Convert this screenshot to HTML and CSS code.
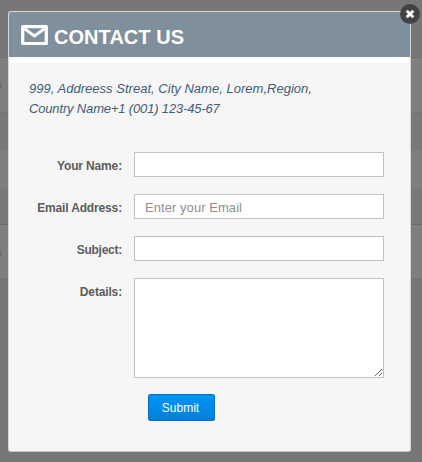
FILE: index.html
```html
<!DOCTYPE html>
<html lang="en">
<head>
<meta charset="utf-8">
<title>Contact Us</title>
<link rel="stylesheet" href="styles.css">
</head>
<body>
<div class="edge edge-top">s</div>
<div class="edge edge-bottom">s</div>
<main class="modal">
  <header class="modal-header">
    <svg class="mail" width="27" height="20" viewBox="0 0 27 20"><rect x="1.7" y="1.7" width="23.6" height="16.8" fill="none" stroke="#fff" stroke-width="3.2" stroke-linejoin="round"/><path d="M3 3.4 13.5 11 24 3.4" fill="none" stroke="#fff" stroke-width="3"/></svg>
    <h1>CONTACT US</h1>
  </header>
  <div class="modal-body">
    <p class="address"><span class="line-one">999, Addreess Streat, City Name, Lorem,Region,</span><br><span class="line-two">Country Name+1 (001) 123-45-67</span></p>
    <form>
      <label class="label-name" for="name">Your Name:</label><input id="name" type="text">
      <label class="label-email" for="email">Email Address:</label><input id="email" type="text" placeholder="Enter your Email">
      <label class="label-subject" for="subject">Subject:</label><input id="subject" type="text">
      <label class="label-details" for="details">Details:</label><textarea id="details"></textarea>
      <button type="button">Submit</button>
    </form>
  </div>
  <svg class="close" width="20" height="20" viewBox="0 0 20 20"><circle cx="10" cy="10" r="10" fill="#424242"/><path d="m6.7 6.7 6.6 6.6m0-6.6-6.6 6.6" stroke="#fff" stroke-width="2.8"/></svg>
</main>
</body>
</html>
```
FILE: styles.css
```css
* { box-sizing: border-box; }
body {
  margin: 0;
  height: 462px;
  padding: 11px 11px 0 8px;
  overflow: hidden;
  position: relative;
  font-family: "Liberation Sans", Arial, sans-serif;
  background: linear-gradient(#777 57px, #6f6f6f 57px 58px, #7f7f7f 58px 112px, #747474 112px 113px, #797979 113px 150px, #7e7e7e 150px 188px, #797979 188px 224px, #6c6c6c 224px 225px, #7f7f7f 225px 278px, #747474 278px 280px, #777 280px);
}
.edge { position: absolute; left: -4px; font-size: 12px; line-height: 14px; color: #666; }
.edge-top { top: 77px; }
.edge-bottom { top: 245px; }
.modal {
  position: relative;
  width: 403px;
  height: 441px;
  border: 1px solid #d5d8da;
  border-bottom-color: #c8c8c8;
  border-radius: 3px;
  background: #f6f6f6;
}
.modal-header {
  height: 51px;
  padding-left: 12px;
  display: flex;
  align-items: flex-start;
  gap: 6px;
  background: #7f8f9b;
  border-bottom: 6px solid #fff;
  border-radius: 2px 2px 0 0;
}
.mail { margin-top: 13px; }
h1 { margin: 13px 0 0; font-size: 20px; line-height: 24px; color: #fff; letter-spacing: .05px; }
.modal-body { padding: 16px 26px 0 20px; }
.address { margin: 0; font-size: 13px; line-height: 20px; font-style: italic; color: #3f5d78; white-space: nowrap; }
.line-one { letter-spacing: .02px; }
.line-two { letter-spacing: -.16px; }
form {
  margin-top: 33px;
  display: grid;
  grid-template-columns: 93px 250px;
  grid-template-rows: 25px 25px 25px 100px;
  column-gap: 12px;
  row-gap: 17px;
}
label { text-align: right; font-size: 12px; line-height: 14px; font-weight: bold; color: #5c5c5c; padding-top: 7px; white-space: nowrap; letter-spacing: -.15px; }
.label-subject { letter-spacing: -.25px; }
input, textarea {
  display: block;
  width: 100%;
  height: 100%;
  margin: 0;
  padding: 0 10px;
  border: 1px solid #c2c2c6;
  background: #fff;
  font: 13px "Liberation Sans", Arial, sans-serif;
}
input { padding-top: 1px; }
input::placeholder { color: #8f8f8f; opacity: 1; letter-spacing: .06px; }
button {
  grid-column: 2;
  width: 67px;
  height: 27px;
  margin: -1px 0 0 14px;
  padding: 0 2px 0 0;
  border: 1px solid #0872c2;
  border-radius: 2px;
  background: linear-gradient(#0095fb, #0380d6);
  color: #fff;
  font: 12px "Liberation Sans", Arial, sans-serif;
}
.close { position: absolute; right: -10px; top: -8px; }
```
